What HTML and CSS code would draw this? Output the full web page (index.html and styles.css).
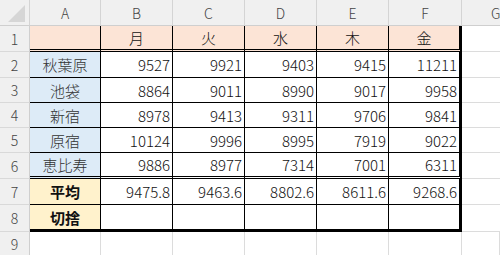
FILE: index.html
```html
<!DOCTYPE html>
<html lang="ja">
<head>
<meta charset="utf-8">
<link rel="stylesheet" href="styles.css">
</head>
<body>
<div class="sheet">
  <div class="ch corner"><span class="tri"></span></div>
  <div class="ch">A</div><div class="ch">B</div><div class="ch">C</div><div class="ch">D</div><div class="ch">E</div><div class="ch">F</div><div class="ch g">G</div>

  <div class="rh">1</div>
  <div class="c hd dbl"></div><div class="c hd dbl">月</div><div class="c hd dbl">火</div><div class="c hd dbl">水</div><div class="c hd dbl">木</div><div class="c hd dbl thr">金</div><div class="gc"></div>

  <div class="rh">2</div>
  <div class="c lbl">秋葉原</div><div class="c num">9527</div><div class="c num">9921</div><div class="c num">9403</div><div class="c num">9415</div><div class="c num thr">11211</div><div class="gc"></div>

  <div class="rh">3</div>
  <div class="c lbl">池袋</div><div class="c num">8864</div><div class="c num">9011</div><div class="c num">8990</div><div class="c num">9017</div><div class="c num thr">9958</div><div class="gc"></div>

  <div class="rh">4</div>
  <div class="c lbl">新宿</div><div class="c num">8978</div><div class="c num">9413</div><div class="c num">9311</div><div class="c num">9706</div><div class="c num thr">9841</div><div class="gc"></div>

  <div class="rh">5</div>
  <div class="c lbl">原宿</div><div class="c num">10124</div><div class="c num">9996</div><div class="c num">8995</div><div class="c num">7919</div><div class="c num thr">9022</div><div class="gc"></div>

  <div class="rh">6</div>
  <div class="c lbl dbl">恵比寿</div><div class="c num dbl">9886</div><div class="c num dbl">8977</div><div class="c num dbl">7314</div><div class="c num dbl">7001</div><div class="c num dbl thr">6311</div><div class="gc"></div>

  <div class="rh">7</div>
  <div class="c sum">平均</div><div class="c num">9475.8</div><div class="c num">9463.6</div><div class="c num">8802.6</div><div class="c num">8611.6</div><div class="c num thr">9268.6</div><div class="gc"></div>

  <div class="rh">8</div>
  <div class="c sum thb">切捨</div><div class="c num thb"></div><div class="c num thb"></div><div class="c num thb"></div><div class="c num thb"></div><div class="c num thb thr"></div><div class="gc"></div>

  <div class="rh last">9</div>
  <div class="gc last"></div><div class="gc last"></div><div class="gc last"></div><div class="gc last"></div><div class="gc last"></div><div class="gc last"></div><div class="gc last"></div>
</div>
</body>
</html>
```

FILE: styles.css
```css
html, body {
  margin: 0;
  padding: 0;
  background: #ffffff;
}

.sheet {
  display: grid;
  grid-template-columns: 30px 71px 72px 72px 72px 72px 73px 1fr;
  grid-template-rows: 26px 26px 26px 25px 25px 25px 26px 26px 27px 1fr;
  width: 500px;
  height: 255px;
  overflow: hidden;
  font-family: "Noto Sans CJK JP", "Liberation Sans", sans-serif;
}

.sheet > div {
  box-sizing: border-box;
  display: flex;
  align-items: center;
  overflow: hidden;
  white-space: nowrap;
}

.ch {
  background: #f0f0f0;
  color: #444444;
  font-size: 14px;
  font-weight: 300;
  justify-content: center;
  border-right: 1px solid #d4d4d4;
  border-bottom: 1px solid #cfcfcf;
}

.ch.g {
  justify-content: flex-start;
  padding-left: 29px;
  border-right: none;
}

.corner {
  position: relative;
}

.tri {
  position: absolute;
  left: 8px;
  top: 5px;
  width: 0;
  height: 0;
  border-left: 17px solid transparent;
  border-bottom: 17px solid #d6d6d6;
}

.rh {
  background: #f0f0f0;
  color: #444444;
  font-size: 14px;
  font-weight: 300;
  justify-content: center;
  border-right: 1px solid #cfcfcf;
  border-bottom: 1px solid #d9d9d9;
}

.rh.last {
  border-bottom: none;
}

.gc {
  border-bottom: 1px solid #dcdcdc;
}

.gc.last {
  border-bottom: none;
  border-right: 1px solid #dcdcdc;
}

.c {
  color: #111111;
  font-size: 15px;
  font-weight: 300;
  border-right: 1px solid #000000;
  border-bottom: 1px solid #000000;
}

.hd {
  background: #fce4d6;
  justify-content: center;
}

.lbl {
  background: #ddebf7;
  justify-content: center;
  color: #333333;
}

.sum {
  background: #fff2cc;
  justify-content: center;
  font-weight: bold;
}

.num {
  justify-content: flex-end;
  padding-right: 2px;
}

.dbl {
  border-bottom: 3px double #000000;
}

.thr {
  border-right: 3px solid #000000;
}

.thb {
  border-bottom: 3px solid #000000;
}
```
